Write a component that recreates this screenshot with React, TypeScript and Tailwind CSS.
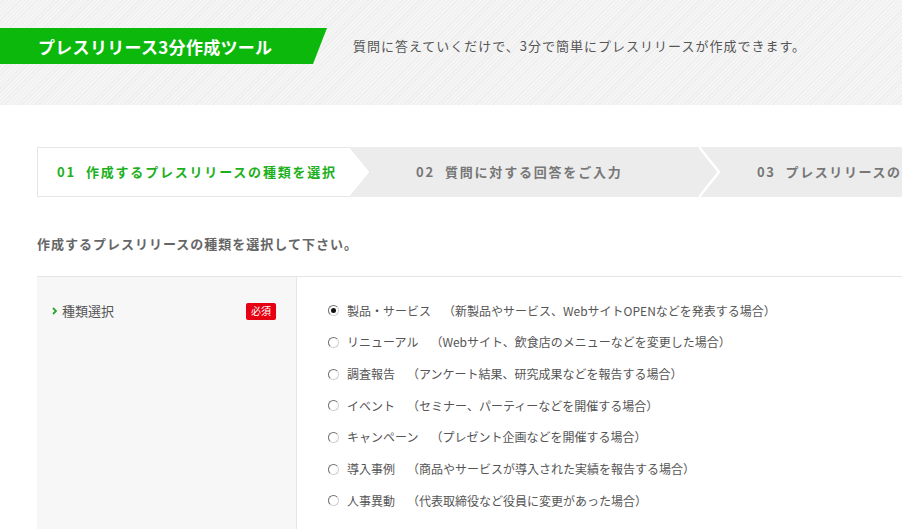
import React from "react";

const options: [string, string, boolean][] = [
  ["製品・サービス", "（新製品やサービス、WebサイトOPENなどを発表する場合）", true],
  ["リニューアル", "（Webサイト、飲食店のメニューなどを変更した場合）", false],
  ["調査報告", "（アンケート結果、研究成果などを報告する場合）", false],
  ["イベント", "（セミナー、パーティーなどを開催する場合）", false],
  ["キャンペーン", "（プレゼント企画などを開催する場合）", false],
  ["導入事例", "（商品やサービスが導入された実績を報告する場合）", false],
  ["人事異動", "（代表取締役など役員に変更があった場合）", false],
];

function Radio({ checked }: { checked: boolean }) {
  return (
    <span className="flex h-[11px] w-[11px] shrink-0 items-center justify-center rounded-full border border-t-[#707070] border-l-[#707070] border-b-[#d0d0d0] border-r-[#d0d0d0] bg-white">
      {checked && <span className="block h-[5px] w-[5px] rounded-full bg-[#111]" />}
    </span>
  );
}

export default function App() {
  return (
    <div className="h-[529px] w-[902px] overflow-hidden bg-white font-['Noto_Sans_CJK_JP','Noto_Sans',sans-serif]">
      <header className="h-[105px] bg-[repeating-linear-gradient(135deg,#f5f5f5_0px,#f5f5f5_2px,#eeeeee_2px,#eeeeee_3px)] pt-[28px]">
        <div className="flex items-center">
          <div className="flex h-[36px] w-[327px] shrink-0 items-center bg-[#0cb80c] pl-[38px] [clip-path:polygon(0_0,100%_0,calc(100%-14px)_100%,0_100%)]">
            <h1 className="text-[17px] font-bold leading-none tracking-[0.3px] text-white">プレスリリース3分作成ツール</h1>
          </div>
          <p className="ml-[26px] text-[13px] tracking-[1px] text-[#555] whitespace-nowrap">
            質問に答えていくだけで、3分で簡単にプレスリリースが作成できます。
          </p>
        </div>
      </header>

      <main className="pl-[37px] pt-[42px]">
        <div className="flex h-[50px] w-[865px] overflow-hidden">
          <div className="relative z-20 flex w-[313px] shrink-0 items-center border border-r-0 border-[#e6e6e6] bg-white pl-[19px] text-[13px] font-bold tracking-[1.8px] text-[#1cb01c] whitespace-nowrap">
            <span>01</span>
            <span className="ml-[10px]">作成するプレスリリースの種類を選択</span>
            <svg className="absolute right-[-21px] top-[-1px] h-[50px] w-[21px]" viewBox="0 0 21 50">
              <path d="M0 0 L20 25 L0 50 Z" fill="#ffffff" />
              <path d="M0 0.5 L20 25 L0 49.5" fill="none" stroke="#e6e6e6" strokeWidth="1" />
            </svg>
          </div>
          <div className="relative z-10 flex w-[350px] shrink-0 items-center bg-[#ececec] pl-[66px] text-[13px] font-bold tracking-[1.8px] text-[#777] whitespace-nowrap">
            <span>02</span>
            <span className="ml-[10px]">質問に対する回答をご入力</span>
            <svg className="absolute right-[-21px] top-0 h-[50px] w-[22px]" viewBox="0 0 22 50">
              <path d="M0 0 L20 25 L0 50" fill="none" stroke="#ffffff" strokeWidth="2.5" />
            </svg>
          </div>
          <div className="flex flex-1 items-center bg-[#ececec] pl-[57px] text-[13px] font-bold tracking-[1.6px] text-[#777] whitespace-nowrap">
            <span>03</span>
            <span className="ml-[10px]">プレスリリースの</span>
          </div>
        </div>

        <h2 className="mt-[37px] text-[13px] font-bold leading-[20px] tracking-[1px] text-[#666]">
          作成するプレスリリースの種類を選択して下さい。
        </h2>

        <div className="mt-[22px] flex h-[260px] w-[865px] border-t border-[#e5e5e5]">
          <div className="w-[260px] shrink-0 border-r border-[#e6e6e6] bg-[#f7f7f7]">
            <div className="mt-[25px] flex h-[18px] items-center pl-[15px] pr-[20px]">
              <svg className="h-[8px] w-[5px]" viewBox="0 0 5 8">
                <path d="M1 1 L4 4 L1 7" fill="none" stroke="#2aa52a" strokeWidth="1.8" />
              </svg>
              <span className="ml-[5px] text-[13px] text-[#555]">種類選択</span>
              <span className="ml-auto flex h-[17px] w-[30px] items-center justify-center rounded-[2px] bg-[#e60012] text-[10px] leading-none text-white">
                必須
              </span>
            </div>
          </div>
          <div className="flex-1 pl-[31px] pt-[18px]">
            {options.map(([label, desc, checked]) => (
              <div key={label} className="flex h-[31.67px] items-center text-[12px] text-[#555] whitespace-nowrap">
                <Radio checked={checked} />
                <span className="ml-[8px]">{label}</span>
                <span className="ml-[12px]">{desc}</span>
              </div>
            ))}
          </div>
        </div>
      </main>
    </div>
  );
}
